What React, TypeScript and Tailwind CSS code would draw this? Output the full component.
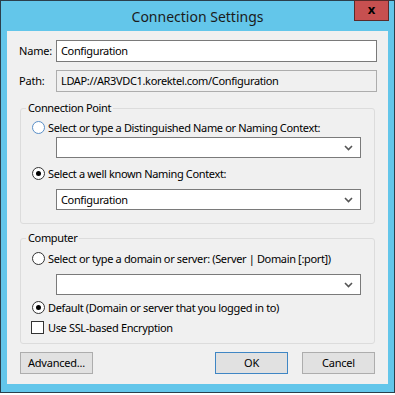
import React from "react"

const font = { fontFamily: '"Noto Sans", "Open Sans", sans-serif' }

function Chevron() {
  return (
    <svg width="9" height="6" viewBox="0 0 9 6" className="shrink-0">
      <path d="M1 1 L4.5 4.5 L8 1" fill="none" stroke="#555" strokeWidth="1.6" />
    </svg>
  )
}

function Combo({ value = "" }: { value?: string }) {
  return (
    <div className="ml-[35px] w-[305px] h-[21px] border border-[#7a7a7a] bg-white flex items-center justify-between pl-[4px] pr-[7px]">
      <span className="text-[11px] tracking-[-0.35px] text-black leading-none">{value}</span>
      <Chevron />
    </div>
  )
}

function Radio({ checked, label, focus }: { checked?: boolean; label: string; focus?: boolean }) {
  return (
    <div className="flex items-center h-[16px] pl-[11px]">
      <span
        className={`shrink-0 w-[13px] h-[13px] rounded-full border bg-white flex items-center justify-center ${
          focus ? "border-[#5a8fc8]" : "border-[#333333]"
        }`}
      >
        {checked && <span className="w-[5px] h-[5px] rounded-full bg-black" />}
      </span>
      <span className="ml-[3px] text-[11px] tracking-[-0.35px] text-black leading-none whitespace-nowrap">{label}</span>
    </div>
  )
}

function Group({ title, className, children }: { title: string; className: string; children: React.ReactNode }) {
  return (
    <div className={`ml-[1px] w-[355px] border border-[#dcdcdc] rounded-[3px] ${className}`}>
      <div className="-mt-[9px] ml-[5px] w-fit px-[2px] bg-[#f0f0f0] text-[11px] tracking-[-0.35px] text-black leading-[16px]">
        {title}
      </div>
      {children}
    </div>
  )
}

function Button({ label, primary }: { label: string; primary?: boolean }) {
  return (
    <div
      className={`w-[73px] h-[22px] bg-[#e1e1e1] border flex items-center justify-center text-[11px] tracking-[-0.2px] text-black ${
        primary ? "border-[#3f86c4]" : "border-[#adadad]"
      }`}
    >
      {label}
    </div>
  )
}

export default function App() {
  return (
    <div className="w-[395px] h-[395px] bg-white" style={font}>
      <div className="w-[395px] h-[393px] border border-[#2b3f4c] bg-[#63c6ea] flex flex-col">
        {/* Title bar */}
        <div className="relative h-[30px] flex items-center justify-center">
          <span className="text-[14px] text-[#1b1b1b] mt-[1px]">Connection Settings</span>
          <div className="absolute top-[-1px] right-[5px] w-[35px] h-[21px] bg-[#c75050] border border-[#5a2a2a] flex items-center justify-center">
            <span className="text-[13px] font-bold text-black leading-none mb-[2px]">x</span>
          </div>
        </div>

        {/* Client area */}
        <div className="mx-[6px] mb-[8px] flex-1 bg-[#f0f0f0] pt-[9px] pl-[12px]">
          <div className="flex items-center">
            <span className="w-[37px] text-[11px] tracking-[-0.2px] text-black">Name:</span>
            <div className="w-[321px] h-[22px] border border-[#7a7a7a] bg-white flex items-center px-[4px] text-[11px] tracking-[-0.35px] text-black">
              Configuration
            </div>
          </div>
          <div className="flex items-center mt-[8px]">
            <span className="w-[37px] text-[11px] tracking-[-0.2px] text-black">Path:</span>
            <div className="w-[321px] h-[22px] border border-[#adadad] bg-[#f0f0f0] flex items-center px-[4px] text-[11px] tracking-[-0.35px] text-black">
              LDAP://AR3VDC1.korektel.com/Configuration
            </div>
          </div>

          <Group title="Connection Point" className="mt-[16px] pb-[13px]">
            <div className="mt-[3px]">
              <Radio focus label="Select or type a Distinguished Name or Naming Context:" />
            </div>
            <div className="mt-[2px]">
              <Combo />
            </div>
            <div className="mt-[7px]">
              <Radio checked label="Select a well known Naming Context:" />
            </div>
            <div className="mt-[8px]">
              <Combo value="Configuration" />
            </div>
          </Group>

          <Group title="Computer" className="mt-[14px] pb-[8px]">
            <div className="mt-[4px]">
              <Radio label="Select or type a domain or server: (Server | Domain [:port])" />
            </div>
            <div className="mt-[8px]">
              <Combo />
            </div>
            <div className="mt-[4px]">
              <Radio checked label="Default (Domain or server that you logged in to)" />
            </div>
            <div className="mt-[4px] flex items-center h-[16px] pl-[10px]">
              <span className="shrink-0 w-[13px] h-[13px] border border-[#333333] bg-white" />
              <span className="ml-[4px] text-[11px] tracking-[-0.35px] text-black leading-none whitespace-nowrap">
                Use SSL-based Encryption
              </span>
            </div>
          </Group>

          <div className="mt-[8px] ml-[1px] w-[355px] flex items-center">
            <Button label="Advanced..." />
            <div className="flex-1" />
            <Button primary label="OK" />
            <div className="w-[14px]" />
            <Button label="Cancel" />
          </div>
        </div>
      </div>
    </div>
  )
}
